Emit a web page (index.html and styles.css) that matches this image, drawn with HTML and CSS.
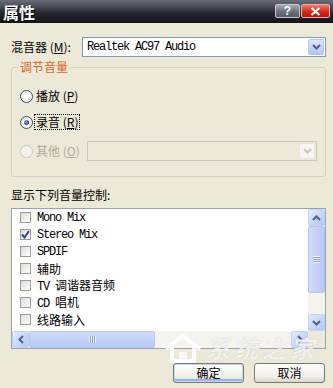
FILE: index.html
```html
<!DOCTYPE html>
<html lang="zh">
<head>
<meta charset="utf-8">
<title>属性</title>
<link rel="stylesheet" href="styles.css">
</head>
<body>
<div class="window">
  <div class="titlebar">
    <span class="title">属性</span>
    <div class="tb-buttons">
      <span class="tb-btn help">?</span>
      <span class="tb-btn close"><svg width="11" height="9" viewBox="0 0 11 9"><path d="M1.5 1 L9.5 8 M9.5 1 L1.5 8" stroke="#fff" stroke-width="2"/></svg></span>
    </div>
  </div>
  <div class="content">
    <div class="mixer-row">
      <span class="mixer-label">混音器 (<u>M</u>):</span>
      <div class="combo">
        <span class="combo-text en">Realtek AC97 Audio</span>
        <span class="combo-btn"><svg width="9" height="6" viewBox="0 0 9 6"><path d="M1 1 L4.5 4.5 L8 1" fill="none" stroke="#4d6185" stroke-width="2"/></svg></span>
      </div>
    </div>
    <fieldset class="group">
      <legend>调节音量</legend>
      <div class="radio-row r1"><span class="radio"></span><span class="rlabel">播放 (<u>P</u>)</span></div>
      <div class="radio-row r2"><span class="radio checked"></span><span class="rlabel focus">录音 (<u>R</u>)</span></div>
      <div class="radio-row r3">
        <span class="radio disabled"></span><span class="rlabel disabled-text other">其他 (<u>O</u>)</span>
        <div class="combo disabled-combo">
          <span class="combo-text"></span>
          <span class="combo-btn"><svg width="9" height="6" viewBox="0 0 9 6"><path d="M1 1 L4.5 4.5 L8 1" fill="none" stroke="#c9c7ba" stroke-width="2"/></svg></span>
        </div>
      </div>
    </fieldset>
    <div class="list-label">显示下列音量控制:</div>
    <div class="listbox">
      <div class="list-items">
        <div class="item"><span class="cb"></span><span class="en">Mono Mix</span></div>
        <div class="item"><span class="cb"><svg width="9" height="9" viewBox="0 0 9 9"><path d="M1 4.5 L3.5 7.5 L8 1" fill="none" stroke="#2a4c8e" stroke-width="2"/></svg></span><span class="en">Stereo Mix</span></div>
        <div class="item"><span class="cb"></span><span class="en">SPDIF</span></div>
        <div class="item"><span class="cb"></span><span>辅助</span></div>
        <div class="item"><span class="cb"></span><span><span class="en">TV </span>调谐器音频</span></div>
        <div class="item"><span class="cb"></span><span><span class="en">CD </span>唱机</span></div>
        <div class="item"><span class="cb"></span><span>线路输入</span></div>
        <div class="item"><span class="cb"></span><span>麦克风</span></div>
      </div>
      <div class="vscroll">
        <span class="sb-btn"><svg width="9" height="6" viewBox="0 0 9 6"><path d="M1 5 L4.5 1.5 L8 5" fill="none" stroke="#4d6185" stroke-width="2"/></svg></span>
        <div class="vtrack"><span class="vthumb"><span class="grip-h"></span></span></div>
        <span class="sb-btn"><svg width="9" height="6" viewBox="0 0 9 6"><path d="M1 1 L4.5 4.5 L8 1" fill="none" stroke="#4d6185" stroke-width="2"/></svg></span>
      </div>
      <div class="hscroll">
        <span class="sb-btn"><svg width="6" height="9" viewBox="0 0 6 9"><path d="M5 1 L1.5 4.5 L5 8" fill="none" stroke="#4d6185" stroke-width="2"/></svg></span>
        <div class="htrack"><span class="hthumb"><span class="grip-v"></span></span></div>
        <span class="sb-btn"><svg width="6" height="9" viewBox="0 0 6 9"><path d="M1 1 L4.5 4.5 L1 8" fill="none" stroke="#4d6185" stroke-width="2"/></svg></span>
      </div>
      <div class="corner"></div>
    </div>
    <div class="actions">
      <button class="btn default">确定</button>
      <button class="btn">取消</button>
    </div>
  </div>
  <div class="watermark">
    <svg width="38" height="30" viewBox="0 0 38 30"><path d="M2 16 L19 3 L36 16 M8 12 L8 28 L30 28 L30 12" fill="none" stroke="rgba(255,255,255,0.9)" stroke-width="4"/><path d="M15 28 L15 19 L23 19 L23 28" fill="rgba(255,255,255,0.7)"/></svg>
    <span class="wm-cn">系统之家</span>
  </div>
</div>
</body>
</html>
```

FILE: styles.css
```css
* { box-sizing: border-box; }
html, body { margin: 0; padding: 0; }
body {
  width: 333px;
  height: 388px;
  overflow: hidden;
  background: #ece9d8;
  font-family: "Noto Sans CJK SC", "Liberation Sans", sans-serif;
  font-size: 12px;
  line-height: 14px;
  color: #000;
}
u { text-decoration: underline; text-underline-offset: 1px; }
.en {
  font-family: "Liberation Mono", monospace;
  font-size: 12px;
  letter-spacing: -1.2px;
}
.window {
  position: relative;
  width: 333px;
  height: 388px;
  background: #ece9d8;
}
.titlebar {
  height: 23px;
  display: flex;
  align-items: center;
  justify-content: space-between;
  padding: 0 3px 0 3px;
  background: linear-gradient(#6a6c78 0%, #484a56 30%, #24252e 58%, #14151b 100%);
}
.title {
  color: #fff;
  font-weight: bold;
  font-size: 16px;
  line-height: 16px;
  text-shadow: 1px 1px 0 #000;
}
.tb-buttons { display: flex; gap: 1px; margin-top: -1px; }
.tb-btn {
  height: 14px;
  display: flex;
  align-items: center;
  justify-content: center;
  border: 1px solid #c9cbd2;
  border-radius: 2px;
  color: #fff;
  font-family: "Liberation Sans", sans-serif;
  font-weight: bold;
  font-size: 12px;
}
.help {
  width: 25px;
  background: linear-gradient(#a7aab4, #6d717e 55%, #555966);
}
.close {
  width: 29px;
  border-color: #f0b0a8;
  background: linear-gradient(#f07a6e, #d52a1e 55%, #b8140c);
}
.content {
  padding: 0 7px 0 11px;
}
.mixer-row {
  margin-top: 14px;
  height: 20px;
  display: flex;
  align-items: center;
}
.mixer-label { width: 71px; white-space: nowrap; }
.combo {
  flex: 1;
  height: 20px;
  border: 1px solid #7f9db9;
  background: #fff;
  display: flex;
  align-items: center;
  padding: 1px;
}
.combo-text { flex: 1; padding-left: 3px; }
.combo-btn {
  width: 16px;
  height: 16px;
  display: flex;
  align-items: center;
  justify-content: center;
  border: 1px solid #b6c8f0;
  border-radius: 2px;
  background: linear-gradient(#dde6fc, #c2d2f8 60%, #b3c6f2);
}
.group {
  margin: 3px 0 0 0;
  padding: 0 8px 15px 8px;
  border: 1px solid #d0d0bf;
  border-radius: 3px;
  min-width: 0;
}
.group legend {
  padding: 0 2px;
  margin-left: -2px;
  color: #d56a27;
  line-height: 14px;
}
.radio-row {
  height: 20px;
  display: flex;
  align-items: center;
  gap: 2px;
}
.r1 { margin-top: 12px; }
.r2 { margin-top: 6px; }
.r3 { margin-top: 9px; }
.radio {
  width: 13px;
  height: 13px;
  border-radius: 50%;
  border: 1px solid #3d4f6a;
  background: radial-gradient(circle at 60% 60%, #ffffff 30%, #e2e0d6 90%);
  display: flex;
  align-items: center;
  justify-content: center;
  flex: none;
}
.radio.checked::after {
  content: "";
  width: 5px;
  height: 5px;
  border-radius: 50%;
  background: radial-gradient(circle at 35% 35%, #8ea4d6, #2c4a8c 70%);
}
.radio.disabled {
  border-color: #cac8bb;
  background: #f4f3ee;
}
.rlabel { padding: 0 1px; line-height: 14px; white-space: nowrap; }
.rlabel.focus { outline: 1px dotted #000; outline-offset: 0; }
.disabled-text { color: #aca899; }
.other { width: 50px; }
.disabled-combo {
  border-color: #c9c7ba;
  background: #ece9d8;
}
.disabled-combo .combo-btn {
  border-color: #e6e4dc;
  background: #f7f6f2;
}
.list-label { margin-top: 11px; }
.listbox {
  margin-top: 6px;
  height: 141px;
  border: 1px solid #9aa3ad;
  background: #fff;
  display: grid;
  grid-template-columns: 1fr 17px;
  grid-template-rows: 1fr 17px;
  overflow: hidden;
}
.list-items {
  overflow: hidden;
  padding-left: 8px;
}
.item {
  height: 17px;
  display: flex;
  align-items: center;
  gap: 6px;
  white-space: nowrap;
}
.cb {
  width: 11px;
  height: 11px;
  border: 1px solid #9c9c98;
  background: linear-gradient(135deg, #dcdbd5, #ffffff);
  display: flex;
  align-items: center;
  justify-content: center;
  flex: none;
}
.vscroll {
  display: flex;
  flex-direction: column;
  background: #f4f3ee;
}
.hscroll {
  display: flex;
  background: #f4f3ee;
}
.sb-btn {
  width: 17px;
  height: 17px;
  flex: none;
  display: flex;
  align-items: center;
  justify-content: center;
  border: 1px solid #c4d3f5;
  border-radius: 2px;
  background: linear-gradient(135deg, #e4ecfd, #c4d4f8 60%, #b4c6f0);
}
.vtrack { flex: 1; display: flex; flex-direction: column; }
.vthumb {
  height: 67px;
  border: 1px solid #b4c5ee;
  border-radius: 2px;
  background: linear-gradient(90deg, #d0dcfa, #c4d2f6 50%, #b8c9f2);
  display: flex;
  align-items: center;
  justify-content: center;
}
.grip-h {
  width: 7px;
  height: 7px;
  background: repeating-linear-gradient(#eef2fd 0 1px, #8c9fcb 1px 2px);
}
.htrack { flex: 1; display: flex; }
.hthumb {
  width: 126px;
  border: 1px solid #b4c5ee;
  border-radius: 2px;
  background: linear-gradient(#d0dcfa, #c4d2f6 50%, #b8c9f2);
  display: flex;
  align-items: center;
  justify-content: center;
}
.grip-v {
  width: 7px;
  height: 7px;
  background: repeating-linear-gradient(90deg, #eef2fd 0 1px, #8c9fcb 1px 2px);
}
.corner { background: #ece9d8; }
.actions {
  margin-top: 14px;
  display: flex;
  justify-content: flex-end;
  gap: 10px;
  padding-right: 1px;
}
.btn {
  width: 71px;
  height: 20px;
  padding: 0;
  border: 1px solid #7a7a74;
  border-radius: 3px;
  background: linear-gradient(#ffffff, #f1f0eb 70%, #d8d4c9);
  font-family: "Noto Sans CJK SC", sans-serif;
  font-size: 12px;
  line-height: 14px;
  color: #000;
}
.btn.default {
  box-shadow: inset 0 0 0 1px #c6d6f6, inset 0 -2px 0 1px #98b4ec;
}
.watermark {
  position: absolute;
  left: 164px;
  top: 333px;
  display: flex;
  align-items: center;
  gap: 4px;
  pointer-events: none;
}
.wm-cn {
  font-size: 24px;
  line-height: 28px;
  font-weight: bold;
  font-style: italic;
  letter-spacing: 4px;
  color: rgba(255, 255, 255, 0.8);
  text-shadow: 0 0 1px rgba(120, 120, 120, 0.4);
}
```
